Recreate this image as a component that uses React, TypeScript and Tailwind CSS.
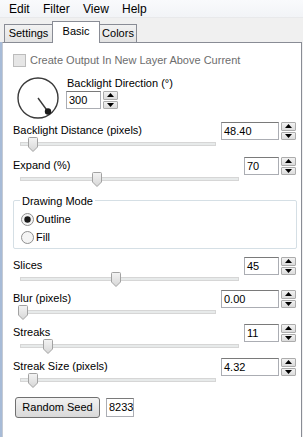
import React from "react"

const font = { fontFamily: '"Liberation Sans", Arial, sans-serif' }

function Spin() {
  return (
    <div className="flex flex-col w-[15px] h-[18px] ml-[2px] gap-px">
      <div className="flex-1 flex items-center justify-center border border-[#acacac] bg-gradient-to-b from-[#f2f2f2] to-[#dcdcdc] rounded-[1px]">
        <svg width="7" height="4" viewBox="0 0 7 4"><path d="M3.5 0 L7 4 L0 4 Z" fill="#000" /></svg>
      </div>
      <div className="flex-1 flex items-center justify-center border border-[#acacac] bg-gradient-to-b from-[#f2f2f2] to-[#dcdcdc] rounded-[1px]">
        <svg width="7" height="4" viewBox="0 0 7 4"><path d="M0 0 L7 0 L3.5 4 Z" fill="#000" /></svg>
      </div>
    </div>
  )
}

function NumBox({ value, wide }: { value: string; wide?: boolean }) {
  return (
    <div className="flex items-center">
      <div
        className={
          "h-[18px] border border-[#abadb3] border-t-[#7a7a7a] bg-white text-[11px] leading-[16px] pl-[2px] text-black " +
          (wide ? "w-[58px]" : "w-[35px]")
        }
      >
        {value}
      </div>
      <Spin />
    </div>
  )
}

function Thumb() {
  return (
    <svg width="10" height="15" viewBox="0 0 10 15">
      <defs>
        <linearGradient id="tg" x1="0" y1="0" x2="0" y2="1">
          <stop offset="0" stopColor="#f4f4f4" />
          <stop offset="1" stopColor="#d6d6d6" />
        </linearGradient>
      </defs>
      <path d="M0.5 1.5 Q0.5 0.5 1.5 0.5 L8.5 0.5 Q9.5 0.5 9.5 1.5 L9.5 10 L5 14.5 L0.5 10 Z" fill="url(#tg)" stroke="#a2a2a2" />
    </svg>
  )
}

function Slider({ pos, wide }: { pos: number; wide?: boolean }) {
  return (
    <div className={"relative h-[14px] ml-[7px] " + (wide ? "w-[196px]" : "w-[219px]")}>
      <div className="absolute left-0 right-0 top-[5px] h-[4px] bg-[#e7eaea] border border-[#d6d6d6]" />
      <div className="absolute top-0" style={{ left: pos - 5 }}>
        <Thumb />
      </div>
    </div>
  )
}

function SliderRow({ label, value, pos, wide, h }: { label: string; value: string; pos: number; wide?: boolean; h: string }) {
  return (
    <div className={"flex items-start " + h}>
      <div className="flex-1">
        <div className="h-[14px] leading-[14px] text-[11px]">{label}</div>
        <Slider pos={pos} wide={wide} />
      </div>
      <div className="mt-[-1px] mr-[5px]">
        <NumBox value={value} wide={wide} />
      </div>
    </div>
  )
}

function Radio({ checked, label }: { checked?: boolean; label: string }) {
  return (
    <div className="flex items-center h-[18px] gap-[2px]">
      <svg width="13" height="13" viewBox="0 0 13 13">
        <circle cx="6.5" cy="6.5" r="6" fill="#f4f4f4" stroke="#8f8f8f" />
        {checked && <circle cx="6.5" cy="6.5" r="3.2" fill="#1a1a1a" />}
      </svg>
      <span className="text-[11px]">{label}</span>
    </div>
  )
}

export default function App() {
  return (
    <div className="w-[303px] h-[437px] bg-[#f0f0f0] flex flex-col overflow-hidden text-black" style={font}>
      {/* menu */}
      <div className="h-[18px] bg-gradient-to-b from-[#f9fafc] to-[#f2f4f7] border-b border-[#e8e9eb] flex items-center pl-[9px] text-[12px]">
        <span className="w-[34px]">Edit</span>
        <span className="w-[40px]">Filter</span>
        <span className="w-[39px]">View</span>
        <span>Help</span>
      </div>

      {/* tabs */}
      <div className="h-[24px] flex items-end pl-[4px] text-[11px] relative z-10">
        <div className="h-[18px] w-[49px] text-center border border-b-0 border-[#898c95] bg-gradient-to-b from-[#f2f2f2] to-[#e3e3e3] leading-[17px]">Settings</div>
        <div className="h-[22px] w-[48px] text-center border border-b-0 border-[#898c95] bg-white leading-[18px] mb-[-1px] -mx-px">Basic</div>
        <div className="h-[18px] w-[38px] text-center border border-b-0 border-[#898c95] bg-gradient-to-b from-[#f2f2f2] to-[#e3e3e3] leading-[17px]">Colors</div>
      </div>

      {/* body */}
      <div className="flex-1 flex">
        <div className="w-[2px] bg-[#a7bbd7]" />
        <div className="flex-1 bg-white border border-b-0 border-[#898c95] border-l-[#c5cad3] mr-[1px] pl-[10px] pt-[10px]">
          <div className="flex items-center gap-[4px] h-[14px]">
            <div className="w-[13px] h-[13px] border border-[#bcbcbc] bg-[#e6e6e6]" />
            <span className="text-[11px] text-[#6d6d6d]">Create Output In New Layer Above Current</span>
          </div>

          <div className="flex h-[56px]">
            <svg width="44" height="46" viewBox="0 0 44 46" className="ml-[3px] mt-[9px]">
              <circle cx="22" cy="22" r="20" fill="none" stroke="#3a3a3a" strokeWidth="1.4" />
              <line x1="22" y1="22" x2="31.5" y2="35" stroke="#3a3a3a" strokeWidth="1.4" />
              <circle cx="32" cy="35.5" r="3.2" fill="#1a1a1a" />
            </svg>
            <div className="ml-[7px] mt-[9px]">
              <div className="text-[11px] h-[14px] leading-[14px]">Backlight Direction (°)</div>
              <div className="mt-[1px] -ml-px">
                <NumBox value="300" />
              </div>
            </div>
          </div>

          <SliderRow label="Backlight Distance (pixels)" value="48.40" pos={13} wide h="h-[35px]" />
          <SliderRow label="Expand (%)" value="70" pos={77} h="h-[34px]" />

          <div className="relative mt-[8px] mr-[4px] h-[49px] border border-[#d5dfe5] rounded-[2px] pl-[7px] pt-[9px]">
            <span className="absolute top-[-8px] left-[6px] bg-white px-[2px] text-[11px]">Drawing Mode</span>
            <Radio checked label="Outline" />
            <Radio label="Fill" />
          </div>

          <div className="mt-[9px]">
            <SliderRow label="Slices" value="45" pos={96} h="h-[33px]" />
            <SliderRow label="Blur (pixels)" value="0.00" pos={3} wide h="h-[34px]" />
            <SliderRow label="Streaks" value="11" pos={28} h="h-[34px]" />
            <SliderRow label="Streak Size (pixels)" value="4.32" pos={13} wide h="h-[34px]" />
          </div>

          <div className="flex items-center mt-[4px] ml-[2px] gap-[6px]">
            <div className="w-[85px] h-[21px] border border-[#707070] rounded-[3px] bg-gradient-to-b from-[#f2f2f2] to-[#d9d9d9] text-[11px] flex items-center justify-center">
              Random Seed
            </div>
            <div className="w-[28px] h-[19px] border border-[#abadb3] border-t-[#7a7a7a] text-[11px] leading-[17px] pl-[2px]">8233</div>
          </div>
        </div>
      </div>
    </div>
  )
}
